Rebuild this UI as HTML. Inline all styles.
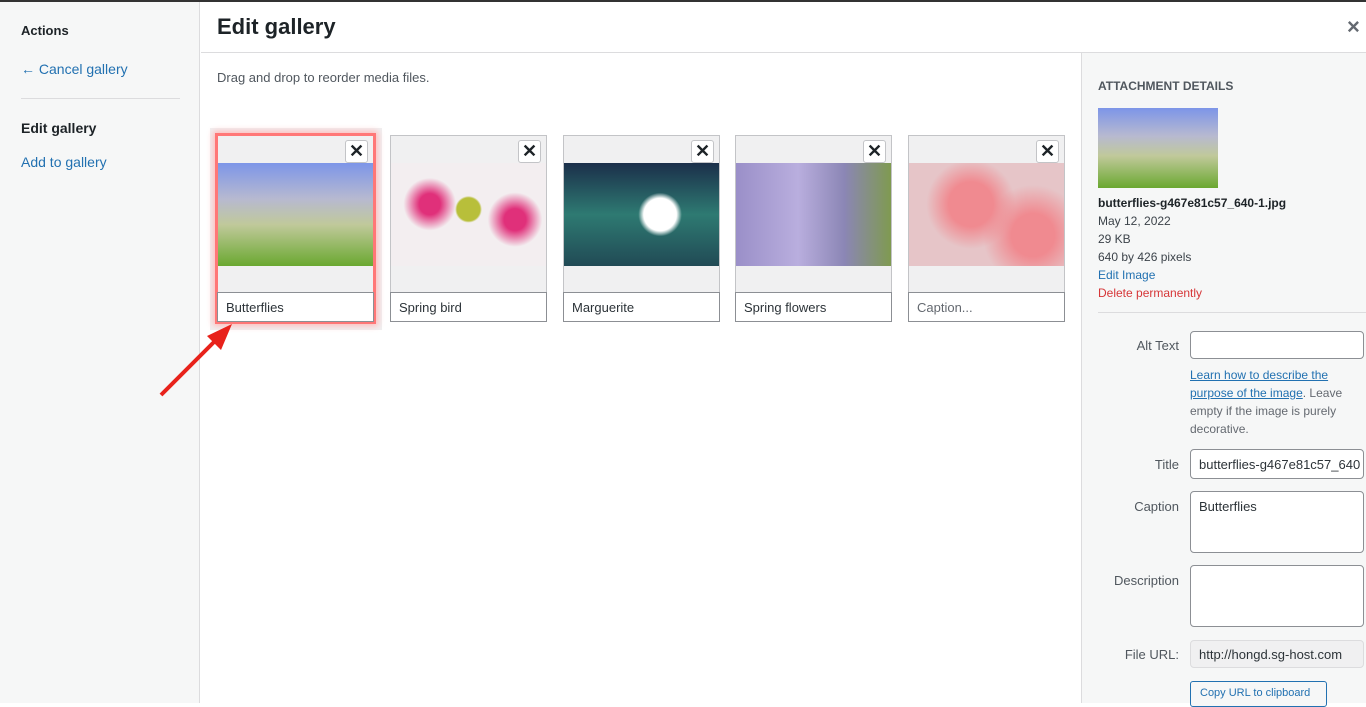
<!DOCTYPE html>
<html><head><style>
*{box-sizing:border-box;margin:0;padding:0}
body{width:1366px;height:703px;overflow:hidden;font-family:"Liberation Sans",sans-serif;background:#fff;position:relative;color:#1d2327;font-size:13px}
.a{position:absolute}
.lnk{color:#2271b1}
.tile{position:absolute;top:135px;width:157px;height:187px;background:#f0f0f1;border:1px solid #c3c4c7}
.tile .img{position:absolute;left:0;right:0;top:27px;height:103px}
.tile .cap{position:absolute;left:-1px;right:-1px;top:156px;height:30px;background:#fff;border:1px solid #8c8f94;padding:7px 8px;font-size:13px;color:#2c3338}
.tile .x{position:absolute;right:5px;top:4px;width:23px;height:23px;background:#fff;border:1px solid #c3c4c7;border-radius:3px;font-size:18px;font-weight:bold;line-height:21px;text-align:center;color:#1d2327}
.lab{position:absolute;right:187px;font-size:13px;color:#50575e}
.inp{position:absolute;left:1190px;width:174px;background:#fff;border:1px solid #8c8f94;border-radius:4px;padding:7px 8px;font-size:13px;color:#2c3338;white-space:nowrap;overflow:hidden}
</style></head><body>
<div class="a" style="left:0;top:0;width:1366px;height:2px;background:#333"></div>
<div class="a" style="left:0;top:2px;width:200px;height:701px;background:#f6f7f7;border-right:1px solid #dcdcde"></div>
<div class="a" style="left:21px;top:23px;font-size:13px;font-weight:600;color:#1d2327">Actions</div>
<div class="a lnk" style="left:21px;top:61px;font-size:14px">← Cancel gallery</div>
<div class="a" style="left:21px;top:98px;width:159px;height:1px;background:#dcdcde"></div>
<div class="a" style="left:21px;top:120px;font-size:14px;font-weight:600">Edit gallery</div>
<div class="a lnk" style="left:21px;top:154px;font-size:14px">Add to gallery</div>
<div class="a" style="left:217px;top:14px;font-size:22px;font-weight:bold">Edit gallery</div>
<div class="a" style="left:1347px;top:14px;font-size:22px;font-weight:bold;color:#646970">×</div>
<div class="a" style="left:201px;top:52px;width:1165px;height:1px;background:#dcdcde"></div>
<div class="a" style="left:217px;top:70px;font-size:13px;color:#50575e">Drag and drop to reorder media files.</div>
<div class="a" style="left:210px;top:128px;width:172px;height:202px;background:#f0f0f1"></div>
<div class="tile" style="left:215px;top:133px;width:161px;height:191px;border:3px solid #f77;box-shadow:0 0 6px 2px #fbb"><div class="img" style="background:linear-gradient(#7d95e8,#b7b9d0 35%,#c0c99a 60%,#6aa830)"></div><div class="x">✕</div><div class="cap" style="left:-1px;right:-1px">Butterflies</div></div>
<div class="tile" style="left:390px"><div class="img" style="background:radial-gradient(circle at 50% 45%,#b8bf3a 12%,transparent 14%),radial-gradient(circle at 25% 40%,#e0307a 8%,transparent 20%),radial-gradient(circle at 80% 55%,#e0307a 8%,transparent 20%),#f3eef0"></div><div class="x">✕</div><div class="cap">Spring bird</div></div>
<div class="tile" style="left:563px"><div class="img" style="background:radial-gradient(circle at 62% 50%,#fff 15%,transparent 20%),linear-gradient(#1b2f4a,#2e7a72 50%,#214a55)"></div><div class="x">✕</div><div class="cap">Marguerite</div></div>
<div class="tile" style="left:735px"><div class="img" style="background:linear-gradient(90deg,#9a8fc8,#b9aede 40%,#8b86b5 70%,#7f9a50)"></div><div class="x">✕</div><div class="cap">Spring flowers</div></div>
<div class="tile" style="left:908px"><div class="img" style="background:radial-gradient(circle at 40% 40%,#f08a90 20%,transparent 40%),radial-gradient(circle at 80% 70%,#f08a90 15%,transparent 35%),#e6c5c8"></div><div class="x">✕</div><div class="cap" style="color:#646970">Caption...</div></div>
<svg class="a" style="left:155px;top:318px" width="85" height="85"><line x1="6" y1="77" x2="65" y2="18" stroke="#e8221b" stroke-width="4"/><polygon points="77,6 52,18 66,32" fill="#e8221b"/></svg>
<div class="a" style="left:1081px;top:53px;width:285px;height:650px;background:#f6f7f7;border-left:1px solid #dcdcde"></div>
<div class="a" style="left:1098px;top:79px;font-size:12px;font-weight:bold;color:#50575e">ATTACHMENT DETAILS</div>
<div class="a" style="left:1098px;top:108px;width:120px;height:80px;background:linear-gradient(#7d95e8,#b7b9d0 35%,#c0c99a 60%,#6aa830)"></div>
<div class="a" style="left:1098px;top:194px;font-size:12px;line-height:18px;color:#3c434a"><b style="color:#1d2327">butterflies-g467e81c57_640-1.jpg</b><br>May 12, 2022<br>29 KB<br>640 by 426 pixels<br><span class="lnk">Edit Image</span><br><span style="color:#d63638">Delete permanently</span></div>
<div class="a" style="left:1098px;top:312px;width:268px;height:1px;background:#dcdcde"></div>
<div class="lab" style="top:338px">Alt Text</div>
<div class="inp" style="top:331px;height:28px"></div>
<div class="a" style="left:1190px;top:366px;width:170px;font-size:12px;line-height:18px;color:#646970"><span class="lnk" style="text-decoration:underline">Learn how to describe the purpose of the image</span>. Leave empty if the image is purely decorative.</div>
<div class="lab" style="top:457px">Title</div>
<div class="inp" style="top:449px;height:30px">butterflies-g467e81c57_640</div>
<div class="lab" style="top:499px">Caption</div>
<div class="inp" style="top:491px;height:62px">Butterflies</div>
<div class="lab" style="top:573px">Description</div>
<div class="inp" style="top:565px;height:62px"></div>
<div class="lab" style="top:647px">File URL:</div>
<div class="inp" style="top:640px;height:28px;background:#f0f0f1;border-color:#dcdcde;padding-top:6px">http://hongd.sg-host.com</div>
<div class="a" style="left:1190px;top:681px;width:137px;height:26px;border:1px solid #2271b1;border-radius:3px;color:#2271b1;font-size:11px;padding:5px 9px;background:#f6f7f7">Copy URL to clipboard</div>
</body></html>
